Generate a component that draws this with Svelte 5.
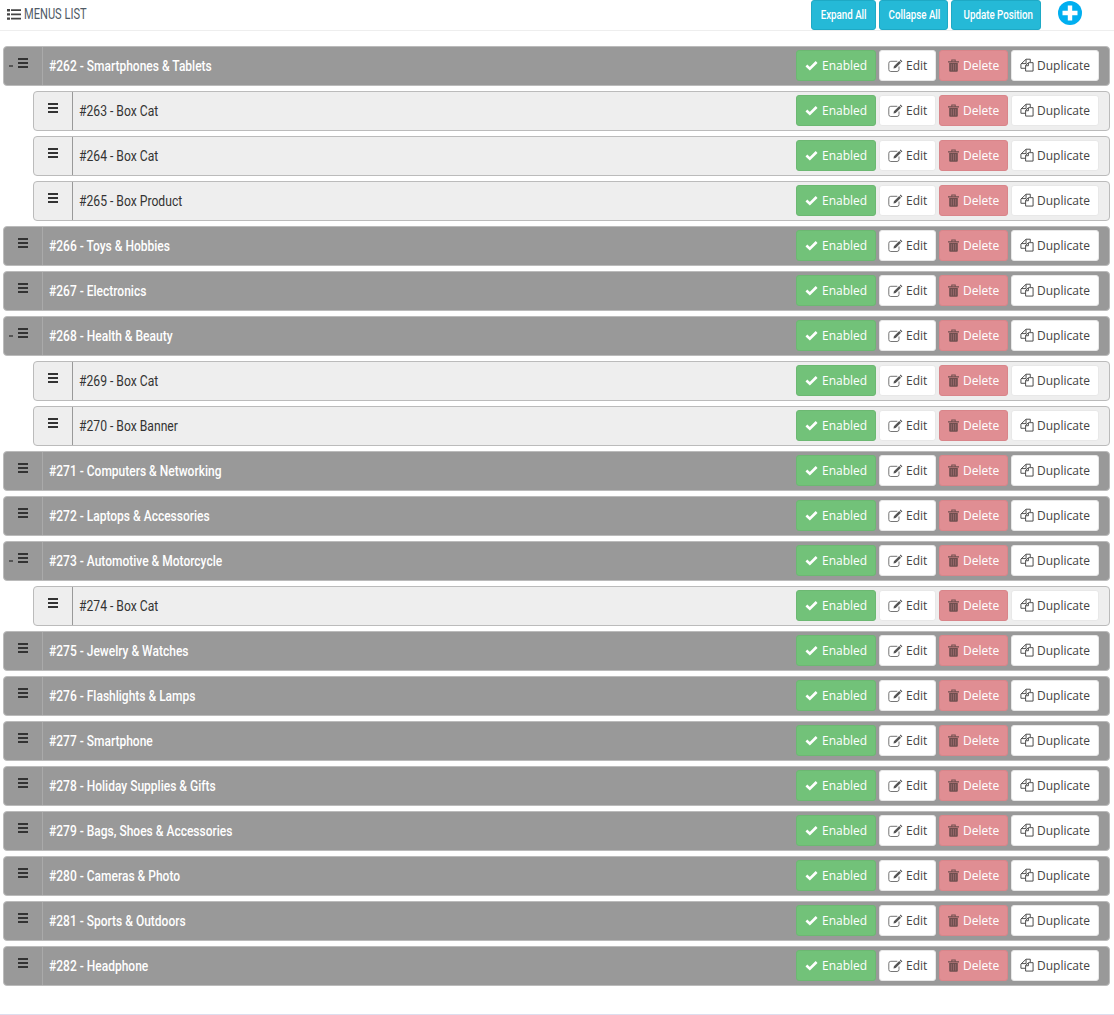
<script lang="ts">
  interface Item {
    id: number;
    name: string;
    child?: boolean;
    open?: boolean;
  }

  const items: Item[] = [
    { id: 262, name: "Smartphones & Tablets", open: true },
    { id: 263, name: "Box Cat", child: true },
    { id: 264, name: "Box Cat", child: true },
    { id: 265, name: "Box Product", child: true },
    { id: 266, name: "Toys & Hobbies" },
    { id: 267, name: "Electronics" },
    { id: 268, name: "Health & Beauty", open: true },
    { id: 269, name: "Box Cat", child: true },
    { id: 270, name: "Box Banner", child: true },
    { id: 271, name: "Computers & Networking" },
    { id: 272, name: "Laptops & Accessories" },
    { id: 273, name: "Automotive & Motorcycle", open: true },
    { id: 274, name: "Box Cat", child: true },
    { id: 275, name: "Jewelry & Watches" },
    { id: 276, name: "Flashlights & Lamps" },
    { id: 277, name: "Smartphone" },
    { id: 278, name: "Holiday Supplies & Gifts" },
    { id: 279, name: "Bags, Shoes & Accessories" },
    { id: 280, name: "Cameras & Photo" },
    { id: 281, name: "Sports & Outdoors" },
    { id: 282, name: "Headphone" },
  ];

  const headButtons = [
    { label: "Expand All", width: 65 },
    { label: "Collapse All", width: 69 },
    { label: "Update Position", width: 90 },
  ];
</script>

<div class="panel">
  <header class="head">
    <div class="title">
      <svg class="list-icon" viewBox="0 0 14 11" width="14" height="11">
        <path d="M0 0h3v2.4H0zM0 4.2h3v2.4H0zM0 8.4h3v2.4H0zM4 .3h10v1.8H4zM4 4.5h10v1.800H4zM4 8.700h10v1.800H4z" />
      </svg>
      <span class="narrow">MENUS LIST</span>
    </div>
    <div class="actions">
      {#each headButtons as b}
        <button class="info" style="width: {b.width}px"><span class="narrow">{b.label}</span></button>
      {/each}
      <svg class="add" viewBox="0 0 24 24" width="24" height="24">
        <circle cx="12" cy="12" r="12" fill="#00aff0" />
        <path d="M9.800 4.500h4.400v5.300h5.300v4.400h-5.300v5.300H9.800v-5.300H4.500V9.800h5.300z" fill="#fff" />
      </svg>
    </div>
  </header>

  <div class="list">
    {#each items as item}
      <div class="row" class:child={item.child}>
        <div class="handle">
          {#if item.open}<span class="minus"></span>{/if}
          <svg class="bars" viewBox="0 0 10 10" width="10" height="10">
            <path d="M0 0h10v2H0zM0 4h10v2H0zM0 8h10v2H0z" />
          </svg>
        </div>
        <div class="content">
          <span class="name narrow">#{item.id} - {item.name}</span>
          <div class="btns">
            <button class="btn enabled">
              <svg viewBox="0 0 14 11" width="13" height="11">
                <path d="M1.500 5.500l3.700 3.500 7.300-7.300" fill="none" stroke="currentColor" stroke-width="2.800" />
              </svg>
              Enabled
            </button>
            <button class="btn edit">
              <svg viewBox="0 0 15 13" width="15" height="13">
                <path d="M11 7.500v3a2 2 0 0 1-2 2H2.800a2 2 0 0 1-2-2V4.300a2 2 0 0 1 2-2h6.500" fill="none" stroke="#666" stroke-width=".9" />
                <path d="M5.500 9.500l.4-2.200 5.300-5.300 1.800 1.800-5.300 5.300zM11.800 1.400l.8-.8 1.800 1.800-.8.8z" fill="#555" />
              </svg>
              Edit
            </button>
            <button class="btn delete">
              <svg viewBox="0 0 11 13" width="11" height="13">
                <path d="M0 2.200h11v1.300H0zM3.300 2.200V.5h4.400v1.700h-1V1.400H4.300v.8z" fill="#6e4f4f" />
                <path d="M1.200 4h8.600v7.800a1 1 0 0 1-1 1H2.200a1 1 0 0 1-1-1z" fill="#6e4f4f" />
                <path d="M3.300 5v6.500M5.500 5v6.500M7.700 5v6.500" stroke="#a87074" stroke-width=".7" />
              </svg>
              Delete
            </button>
            <button class="btn dup">
              <svg viewBox="0 0 15 14" width="14" height="14">
                <path d="M11 4V.8H6.500L1 6v4.500h5M6.500 1v4.500H1.500M6 7.500l3-3h5v9H6zM9 4.800v3H6" fill="none" stroke="#444" stroke-width="1" />
              </svg>
              Duplicate
            </button>
          </div>
        </div>
      </div>
    {/each}
  </div>
  <div class="foot"></div>
</div>

<style>
  :global(body) {
    margin: 0;
    background: #fff;
  }

  button {
    cursor: pointer;
  }

  svg {
    flex: none;
  }

  .panel {
    width: 1114px;
    height: 1015px;
    overflow: hidden;
    font-family: "Open Sans", sans-serif;
  }

  /* no condensed face is installed, so Roboto gets squeezed */
  .narrow {
    display: inline-block;
    font-family: Roboto, sans-serif;
    white-space: nowrap;
  }

  .head {
    display: flex;
    justify-content: space-between;
    height: 30px;
    border-bottom: 1px solid #eee;
  }

  .title {
    display: flex;
    align-items: center;
    gap: 3px;
    padding-left: 7px;
    height: 28px;
    font-size: 15px;
    color: #4f5b66;
  }

  .title .narrow {
    transform: scaleX(0.74);
    transform-origin: left center;
  }

  .list-icon {
    fill: #444;
  }

  .actions {
    display: flex;
    align-items: flex-start;
    gap: 3px;
    padding-right: 32px;
  }

  .info {
    height: 30px;
    padding: 0 0 2px;
    overflow: hidden;
    background: #25b9d7;
    border: 1px solid #1ea9c5;
    border-radius: 3px;
    color: #fff;
    font-weight: 500;
    font-size: 13px;
  }

  .info .narrow {
    transform: scaleX(0.75);
  }

  .add {
    margin: 1px 0 0 14px;
  }

  .list {
    display: flex;
    flex-direction: column;
    gap: 5px;
    padding: 15px 4px 0 3px;
  }

  .row {
    display: flex;
    height: 40px;
    box-sizing: border-box;
    background: #999;
    border: 1px solid #bbb;
    border-radius: 4px;
    color: #fff;
  }

  .row.child {
    margin-left: 30px;
    background: #eee;
    color: #333;
  }

  .handle {
    position: relative;
    flex: none;
    width: 39px;
    box-sizing: border-box;
    border-right: 1px solid #aaa;
  }

  .child .handle {
    border-right-color: #999;
  }

  .minus {
    position: absolute;
    left: 5px;
    top: 18px;
    width: 4px;
    height: 2px;
    background: #555;
  }

  .bars {
    position: absolute;
    left: 14px;
    top: 11px;
    fill: #333;
  }

  .content {
    flex: 1;
    display: flex;
    align-items: center;
    justify-content: space-between;
    padding: 0 10px 0 6px;
  }

  .name {
    font-weight: 500;
    font-size: 15px;
    transform: scaleX(0.8);
    transform-origin: left center;
  }

  .child .name {
    font-weight: 400;
    transform: scaleX(0.81);
  }

  .btns {
    display: flex;
    gap: 3px;
    margin-bottom: 2px;
  }

  .btn {
    display: flex;
    align-items: center;
    gap: 3px;
    height: 31px;
    box-sizing: border-box;
    padding: 0 8px;
    border: 1px solid #e8e8e8;
    border-radius: 3px;
    font-family: "Open Sans", sans-serif;
    font-size: 12px;
    background: #fff;
    color: #444;
  }

  .enabled {
    gap: 4px;
    width: 80px;
    background: #72c279;
    border-color: #6cb872;
    color: #fff;
  }

  .edit {
    width: 57px;
  }

  .delete {
    gap: 4px;
    width: 69px;
    background: #e08e93;
    border-color: #d9858a;
    color: #fff;
  }

  .dup {
    width: 88px;
  }

  .foot {
    height: 1px;
    margin-top: 28px;
    background: #dde;
  }
</style>
